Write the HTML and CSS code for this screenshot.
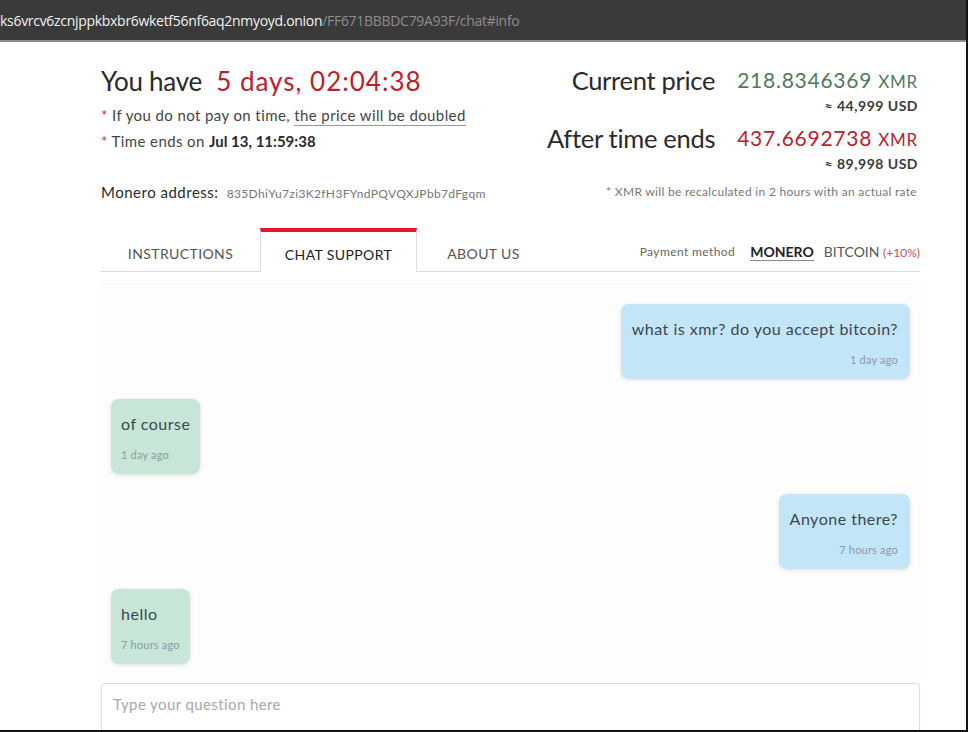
FILE: index.html
```html
<!DOCTYPE html>
<html>
<head>
<meta charset="utf-8">
<link rel="stylesheet" href="styles.css">
</head>
<body>
<div class="frame">
  <div class="urlbar">
    <span class="host">ks6vrcv6zcnjppkbxbr6wketf56nf6aq2nmyoyd.onion</span><span class="path">/FF671BBBDC79A93F/chat#info</span>
  </div>
  <div class="page">
    <div class="header">
      <div class="timer">
        <h1 class="title">You have <span class="red">5 days, 02:04:38</span></h1>
        <p class="note first"><span class="star">*</span> If you do not pay on time, <span class="underline">the price will be doubled</span></p>
        <p class="note"><span class="star">*</span> Time ends on <b>Jul 13, 11:59:38</b></p>
      </div>
      <div class="prices">
        <div class="price-label">Current price</div>
        <div class="price-val">
          <div class="amount green">218.8346369 <span class="cur">XMR</span></div>
          <div class="usd">≈ 44,999 USD</div>
        </div>
        <div class="price-label second">After time ends</div>
        <div class="price-val second">
          <div class="amount red">437.6692738 <span class="cur">XMR</span></div>
          <div class="usd">≈ 89,998 USD</div>
        </div>
      </div>
    </div>
    <div class="addr-row">
      <div class="addr"><span class="addr-label">Monero address:</span> <span class="addr-val">835DhiYu7zi3K2fH3FYndPQVQXJPbb7dFgqm</span></div>
      <div class="recalc">* XMR will be recalculated in 2 hours with an actual rate</div>
    </div>
    <div class="tabs">
      <div class="tab t1">Instructions</div>
      <div class="tab t2 active">Chat support</div>
      <div class="tab t3">About us</div>
      <div class="pay">
        <span class="pay-label">Payment method</span>
        <span class="pay-opt sel">MONERO</span>
        <span class="pay-opt">BITCOIN <span class="plus">(+10%)</span></span>
      </div>
    </div>
    <div class="chat">
      <div class="msg out">
        <div class="text">what is xmr? do you accept bitcoin?</div>
        <div class="time">1 day ago</div>
      </div>
      <div class="msg in">
        <div class="text">of course</div>
        <div class="time">1 day ago</div>
      </div>
      <div class="msg out">
        <div class="text">Anyone there?</div>
        <div class="time">7 hours ago</div>
      </div>
      <div class="msg in">
        <div class="text">hello</div>
        <div class="time">7 hours ago</div>
      </div>
    </div>
    <div class="input">Type your question here</div>
  </div>
</div>
</body>
</html>
```

FILE: styles.css
```css
html, body {
  margin: 0;
  padding: 0;
  background: #fff;
}
body {
  font-family: Lato, "Open Sans", sans-serif;
  color: #2e2e2e;
}
.frame {
  width: 968px;
  height: 732px;
  box-sizing: border-box;
  border-right: 2px solid #141414;
  border-bottom: 2px solid #141414;
  overflow: hidden;
  background: #fff;
}
.urlbar {
  height: 40px;
  background: #3a3a3a;
  border-bottom: 2px solid #8c8c8c;
  display: flex;
  align-items: center;
  font-family: "Open Sans", "Noto Sans", sans-serif;
  font-size: 14px;
  letter-spacing: -0.3px;
}
.host { color: #f2f2f2; }
.path { color: #8e8e8e; }
.page {
  margin-left: 101px;
  width: 819px;
}
.header {
  display: flex;
  justify-content: space-between;
  margin-top: 24px;
}
.title {
  margin: 0;
  font-weight: 400;
  font-size: 26px;
  line-height: 30px;
  color: #2a2a2a;
  letter-spacing: -0.3px;
}
.red { color: #b8232f; }
.green { color: #4f7a5e; }
.title .red {
  margin-left: 8px;
  letter-spacing: 1px;
}
.note {
  margin: 0;
  font-size: 15px;
  letter-spacing: 0.4px;
  color: #444;
  line-height: 18px;
}
.note.first { margin-top: 10px; }
.note + .note { margin-top: 8px; }
.note b { font-weight: 700; color: #2a2a2a; letter-spacing: 0; }
.star { color: #c9303b; }
.underline {
  border-bottom: 1px solid #999;
  padding-bottom: 1px;
}
.prices {
  display: grid;
  grid-template-columns: auto auto;
  column-gap: 22px;
  margin-right: 2px;
  margin-top: -2px;
}
.price-label {
  font-size: 25.5px;
  line-height: 32px;
  text-align: right;
  color: #2a2a2a;
  letter-spacing: -0.3px;
}
.price-val { text-align: right; }
.amount {
  font-size: 21px;
  line-height: 32px;
  letter-spacing: 0.75px;
}
.cur { font-size: 17px; }
.usd {
  font-size: 14px;
  font-weight: 700;
  color: #3a3a3a;
  line-height: 16px;
  letter-spacing: 0.5px;
}
.second { margin-top: 8px; }
.addr-row {
  display: flex;
  justify-content: space-between;
  align-items: center;
  margin-top: 10px;
}
.addr-label {
  font-size: 15px;
  letter-spacing: 0.5px;
  color: #2a2a2a;
}
.addr-val {
  font-size: 12px;
  letter-spacing: 0.35px;
  color: #777;
  margin-left: 4px;
}
.recalc {
  font-size: 12px;
  letter-spacing: 0.3px;
  color: #777;
  margin-right: 3px;
}
.tabs {
  margin-top: 27px;
  display: flex;
  align-items: stretch;
  height: 43px;
  border-bottom: 1px solid #ddd;
}
.tab {
  box-sizing: border-box;
  display: flex;
  align-items: center;
  justify-content: center;
  padding-top: 8px;
  font-size: 14px;
  text-transform: uppercase;
  color: #555;
  letter-spacing: 0.4px;
}
.t1 { width: 159px; }
.t2 { width: 157px; }
.t3 { width: 133px; }
.tab.active {
  border-top: 4px solid #e2192c;
  border-left: 1px solid #ddd;
  border-right: 1px solid #ddd;
  background: #fff;
  color: #222;
  margin-bottom: -1px;
  padding-top: 4px;
}
.pay {
  margin-left: auto;
  display: flex;
  align-items: center;
  gap: 10px;
  padding-top: 4px;
}
.pay-label {
  font-size: 12px;
  letter-spacing: 0.4px;
  color: #666;
  margin-right: 5px;
}
.pay-opt {
  font-size: 14px;
  color: #555;
  letter-spacing: 0;
}
.pay-opt.sel {
  color: #222;
  font-weight: 700;
  border-bottom: 1px solid #888;
}
.plus { color: #d04a5a; font-size: 12px; }
.chat {
  margin-top: 12px;
  background: #fdfdfd;
  box-shadow: 0 0 2px rgba(0,0,0,0.05);
  padding: 20px 10px 14px;
  display: flex;
  flex-direction: column;
  gap: 20px;
}
.msg {
  box-sizing: border-box;
  border-radius: 8px;
  padding: 14px 12px 13px 11px;
  box-shadow: 0 1px 4px rgba(0,0,0,0.12);
}
.msg.out {
  align-self: flex-end;
  background: #c3e5f8;
  text-align: right;
}
.msg.in {
  align-self: flex-start;
  background: #c7e6d7;
  padding-left: 10px;
  padding-right: 10px;
}
.msg .text {
  font-size: 16px;
  line-height: 22px;
  letter-spacing: 0.5px;
  color: #3b4750;
}
.msg .time {
  font-size: 11px;
  line-height: 13px;
  letter-spacing: 0.2px;
  color: #8c9aa3;
  margin-top: 13px;
}
.input {
  margin-top: 5px;
  height: 60px;
  border: 1px solid #ddd;
  border-radius: 4px;
  box-sizing: border-box;
  padding: 11px 11px;
  font-size: 15px;
  letter-spacing: 0.4px;
  color: #a8a8a8;
  box-shadow: 0 0 2px rgba(0,0,0,0.05);
}
```
